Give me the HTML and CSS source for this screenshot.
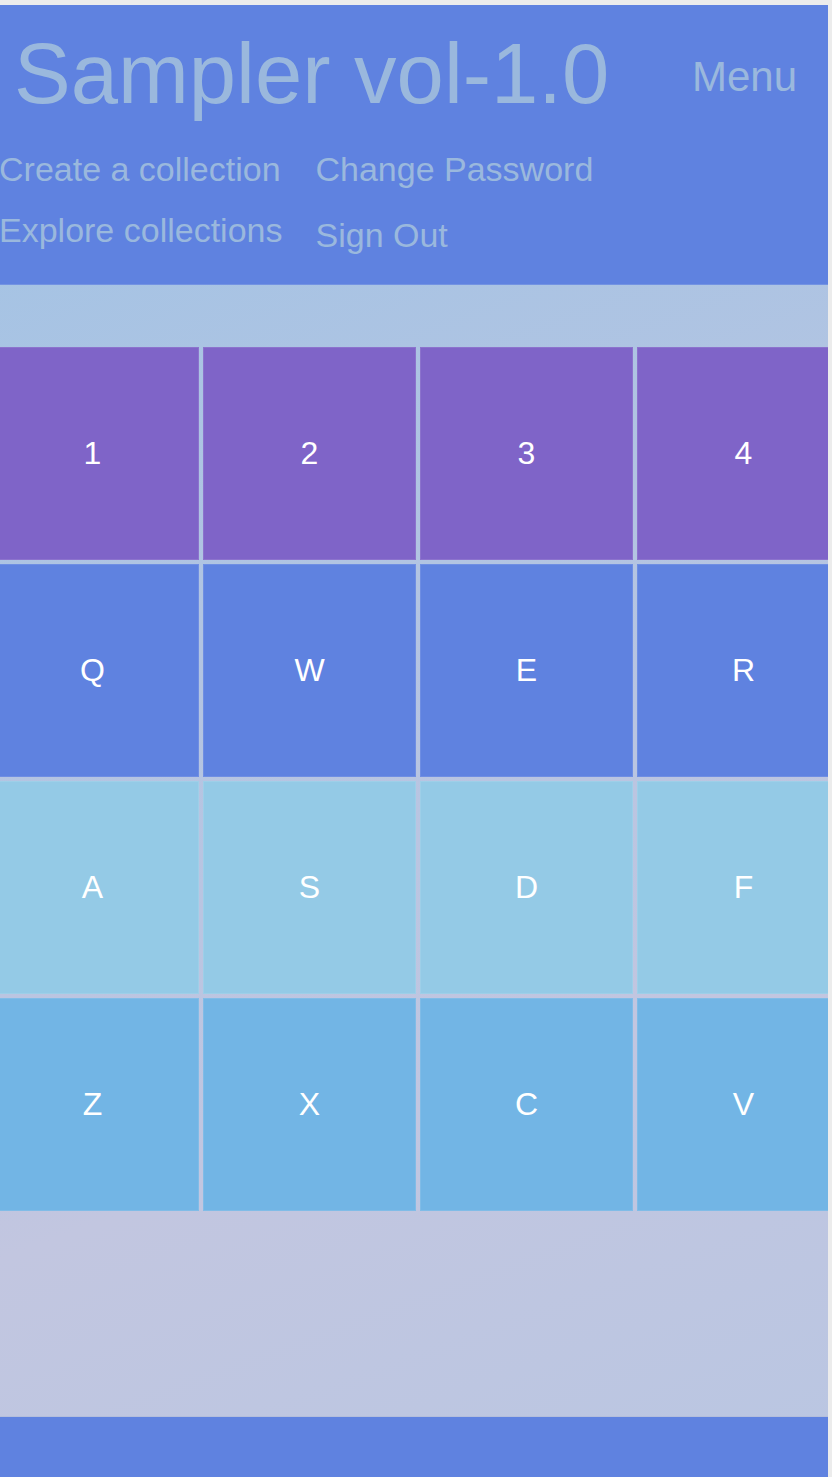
FILE: index.html
```html
<!DOCTYPE html>
<html lang="en">
<head>
<meta charset="utf-8">
<title>Sampler vol-1.0</title>
<link rel="stylesheet" href="styles.css">
</head>
<body>
<div class="page">
  <header class="header">
    <div class="top-row">
      <h1 class="title">Sampler vol-1.0</h1>
      <div class="menu">Menu</div>
    </div>
    <nav class="nav">
      <ul class="nav-col nav-col-1">
        <li>Create a collection</li>
        <li>Explore collections</li>
      </ul>
      <ul class="nav-col nav-col-2">
        <li>Change Password</li>
        <li>Sign Out</li>
      </ul>
    </nav>
  </header>
  <div class="band"></div>
  <div class="pad-wrap">
    <div class="pad">
      <div class="key row-1">1</div>
      <div class="key row-1">2</div>
      <div class="key row-1">3</div>
      <div class="key row-1">4</div>
      <div class="key row-2">Q</div>
      <div class="key row-2">W</div>
      <div class="key row-2">E</div>
      <div class="key row-2">R</div>
      <div class="key row-3">A</div>
      <div class="key row-3">S</div>
      <div class="key row-3">D</div>
      <div class="key row-3">F</div>
      <div class="key row-4">Z</div>
      <div class="key row-4">X</div>
      <div class="key row-4">C</div>
      <div class="key row-4">V</div>
    </div>
  </div>
  <div class="spacer"></div>
  <footer class="footer"></footer>
</div>
</body>
</html>
```

FILE: styles.css
```css
html, body {
  margin: 0;
  padding: 0;
}
body {
  background: #ececec;
  font-family: "Liberation Sans", Arial, sans-serif;
  height: 1477px;
  overflow: hidden;
}
.page {
  width: 828px;
  margin-top: 5px;
  background: linear-gradient(160deg, #9fc3e5 0%, #b2c4e2 40%, #c2c6e0 70%, #b9c6e2 100%);
  overflow: hidden;
}
.header {
  background: #5f82e0;
  color: #9ab8dd;
  padding: 20px 0 29px 0;
  border-bottom: 1px solid #7393e2;
}
.top-row {
  display: flex;
  align-items: flex-start;
  justify-content: space-between;
  padding: 0 31px 0 14px;
}
.title {
  margin: 0;
  font-size: 85px;
  font-weight: normal;
  line-height: normal;
}
.menu {
  font-size: 42px;
  line-height: normal;
  margin-top: 28px;
}
.nav {
  display: flex;
  gap: 33px;
  margin-top: 27px;
}
.nav-col {
  list-style: none;
  margin: 0;
  padding: 0;
  display: flex;
  flex-direction: column;
  font-size: 34px;
  line-height: normal;
}
.nav-col-1 {
  gap: 22px;
  margin-left: -1px;
}
.nav-col-2 {
  gap: 27px;
}
.band {
  height: 62px;
}
.pad-wrap {
  overflow: hidden;
}
.pad {
  display: grid;
  grid-template-columns: repeat(4, 213px);
  grid-auto-rows: 213px;
  gap: 4px;
  margin-left: -14px;
  width: 864px;
}
.key {
  display: flex;
  align-items: center;
  justify-content: center;
  color: #ffffff;
  font-size: 32px;
  box-sizing: border-box;
  border: 1px solid rgba(255, 255, 255, 0.1);
}
.row-1 { background: #7f64c8; }
.row-2 { background: #5f82e0; }
.row-3 { background: #94cae6; }
.row-4 { background: #72b5e5; }
.spacer {
  height: 205px;
  border-bottom: 1px solid #b4bedc;
}
.footer {
  background: #5f82e0;
  height: 80px;
}
```
